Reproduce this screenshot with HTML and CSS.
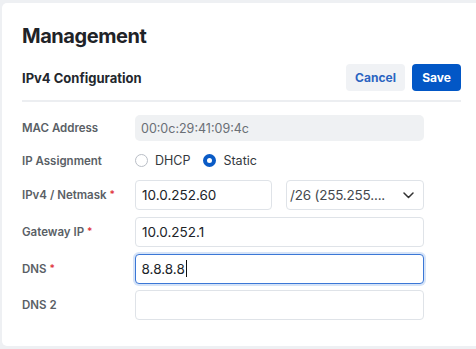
FILE: index.html
```html
<!DOCTYPE html>
<html>
<head>
<meta charset="utf-8">
<link rel="stylesheet" href="styles.css">
</head>
<body>
<div class="card">
  <h1 class="title">Management</h1>
  <div class="section-head">
    <h2 class="section-title">IPv4 Configuration</h2>
    <div class="actions">
      <button class="btn btn-cancel">Cancel</button>
      <button class="btn btn-save">Save</button>
    </div>
  </div>
  <div class="divider"></div>
  <div class="form">
    <div class="label">MAC Address</div>
    <div class="field field-mac">00:0c:29:41:09:4c</div>

    <div class="label">IP Assignment</div>
    <div class="radios">
      <span class="radio"><span class="dot"></span>DHCP</span>
      <span class="radio checked"><span class="dot"></span>Static</span>
    </div>

    <div class="label">IPv4 / Netmask <span class="req">*</span></div>
    <div class="pair">
      <div class="field input">10.0.252.60</div>
      <div class="field select">/26 (255.255....
        <svg class="chev" width="11" height="7" viewBox="0 0 11 7"><path d="M1 1 L5.5 5.5 L10 1" fill="none" stroke="#333" stroke-width="1.5" stroke-linecap="round" stroke-linejoin="round"/></svg>
      </div>
    </div>

    <div class="label">Gateway IP <span class="req">*</span></div>
    <div class="field input">10.0.252.1</div>

    <div class="label">DNS <span class="req">*</span></div>
    <div class="field input focused">8.8.8.8<span class="caret"></span></div>

    <div class="label">DNS 2</div>
    <div class="field input"></div>
  </div>
</div>
</body>
</html>
```

FILE: styles.css
```css
html, body {
  margin: 0;
  padding: 0;
}
body {
  background: #eef0f3;
  font-family: Inter, "Noto Sans", sans-serif;
  width: 476px;
  height: 349px;
  overflow: hidden;
  padding: 3px 0 0 2px;
  box-sizing: border-box;
}
.card {
  background: #fff;
  border-radius: 5px 0 0 5px;
  height: 343px;
  box-sizing: border-box;
  padding: 21px 15px 0 20px;
}
.title {
  margin: 0;
  font-size: 20px;
  line-height: 24px;
  font-weight: 700;
  color: #1f2328;
  letter-spacing: -0.45px;
}
.section-head {
  display: flex;
  align-items: center;
  justify-content: space-between;
  margin-top: 16px;
  height: 27px;
}
.section-title {
  margin: 0;
  font-size: 13px;
  line-height: 16px;
  font-weight: 700;
  color: #23272d;
}
.actions {
  display: flex;
  gap: 7px;
}
.btn {
  font-family: Inter, "Noto Sans", sans-serif;
  font-size: 12px;
  font-weight: 700;
  height: 27px;
  border: none;
  border-radius: 4px;
  padding: 0;
}
.btn-cancel {
  width: 59px;
  background: #f0f2f5;
  color: #2b64c1;
}
.btn-save {
  width: 49px;
  background: #0257c6;
  color: #fff;
}
.divider {
  margin-top: 9px;
  height: 2px;
  background: #eceef1;
}
.form {
  margin-top: 13px;
  width: 401px;
  display: grid;
  grid-template-columns: 113px 1fr;
  row-gap: 6.7px;
  align-items: center;
}
.label {
  font-size: 11.5px;
  font-weight: 600;
  color: #5a5f66;
}
.req {
  color: #e0383f;
  font-size: 10px;
  vertical-align: 1px;
}
.field {
  box-sizing: border-box;
  height: 30px;
  border: 1px solid #dfe3e8;
  border-radius: 4px;
  display: flex;
  align-items: center;
  padding: 0 6px;
  font-size: 13.5px;
  color: #202328;
  background: #fff;
}
.field-mac {
  height: 26px;
  border: none;
  background: #eff1f3;
  border-radius: 5px;
  font-size: 12.5px;
  color: #6a6f76;
}
.radios {
  height: 26px;
  display: flex;
  align-items: center;
  gap: 13px;
  font-size: 12.5px;
  color: #34383d;
}
.radio {
  display: flex;
  align-items: center;
  gap: 7px;
}
.dot {
  box-sizing: border-box;
  width: 13px;
  height: 13px;
  border-radius: 50%;
  border: 1px solid #b9bec6;
  background: #fff;
}
.radio.checked .dot {
  border: 4px solid #0a5bc6;
}
.pair {
  display: grid;
  grid-template-columns: 137px 138px;
  column-gap: 14px;
}
.select {
  justify-content: space-between;
  color: #44484e;
  padding-left: 3px;
  padding-right: 9px;
  letter-spacing: -0.2px;
}
.chev {
  display: block;
}
.focused {
  border: 1.5px solid #3b77d6;
  box-shadow: 0 0 0 2px #d6e4f8;
  padding-left: 5.5px;
}
.caret {
  display: inline-block;
  width: 1px;
  height: 17px;
  background: #111;
  margin-left: 1px;
}
```
